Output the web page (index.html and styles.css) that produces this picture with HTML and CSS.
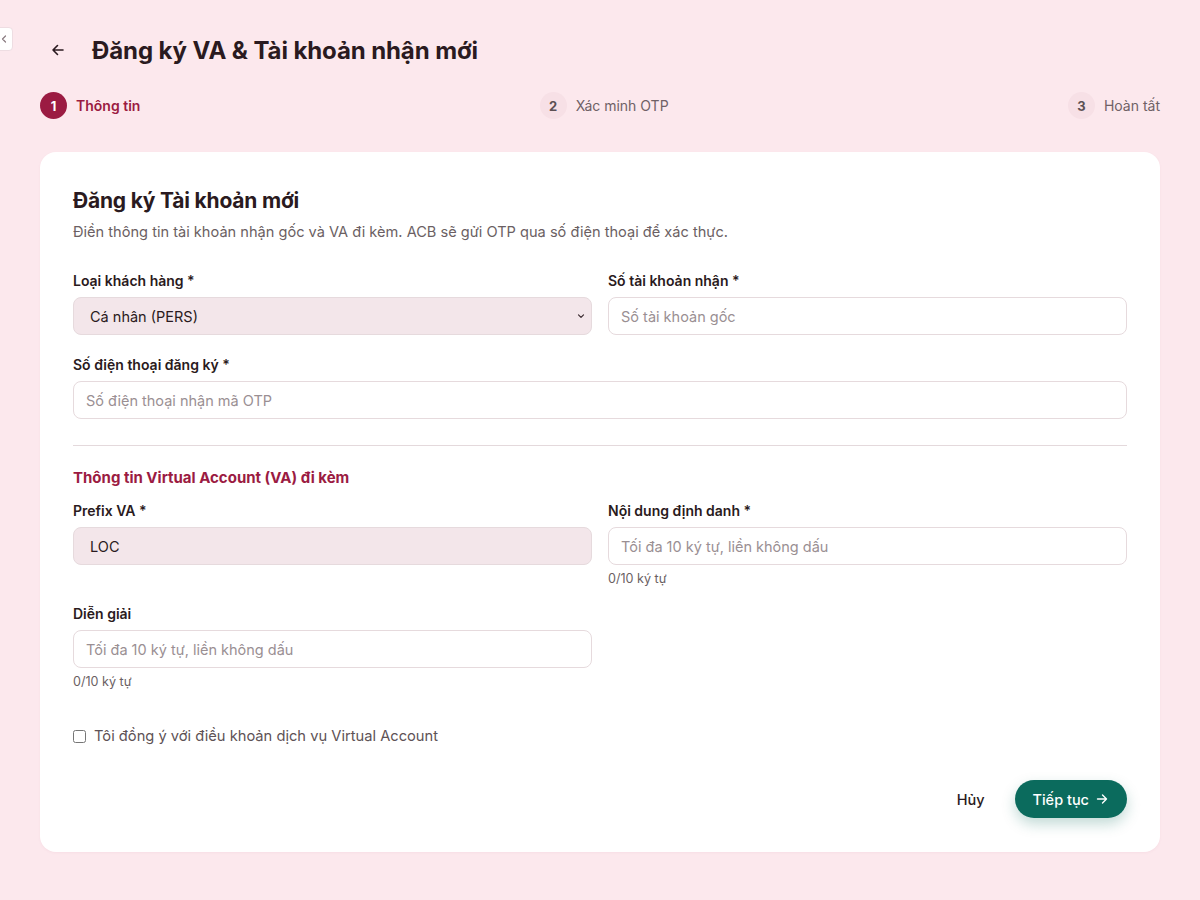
FILE: index.html
```html
<!DOCTYPE html>
<html lang="vi">
<head>
    <meta charset="UTF-8">
    <meta name="viewport" content="width=device-width, initial-scale=1.0">
    <title>Đăng ký VA & Tài khoản nhận mới</title>
    <link rel="stylesheet" href="styles.css">
</head>
<body>
    <!-- nút thu gọn sidebar -->
    <button class="side-toggle" aria-label="Thu gọn">
        <svg width="10" height="10" viewBox="0 0 10 10"><path d="M6.5 2 3.5 5l3 3" fill="none" stroke="#8a7a80" stroke-width="1.2" stroke-linecap="round" stroke-linejoin="round"/></svg>
    </button>

    <div class="page">
        <div class="page-header">
            <button class="back-btn" aria-label="Quay lại">
                <svg width="16" height="16" viewBox="0 0 16 16"><path d="M13 8H3M7.5 3.5 3 8l4.5 4.5" fill="none" stroke="#2a1a20" stroke-width="1.6" stroke-linecap="round" stroke-linejoin="round"/></svg>
            </button>
            <h1>Đăng ký VA &amp; Tài khoản nhận mới</h1>
        </div>

        <div class="stepper">
            <div class="step active"><span class="step-num">1</span><span class="step-label">Thông tin</span></div>
            <div class="step"><span class="step-num">2</span><span class="step-label">Xác minh OTP</span></div>
            <div class="step"><span class="step-num">3</span><span class="step-label">Hoàn tất</span></div>
        </div>

        <div class="card">
            <h2>Đăng ký Tài khoản mới</h2>
            <p class="desc">Điền thông tin tài khoản nhận gốc và VA đi kèm. ACB sẽ gửi OTP qua số điện thoại để xác thực.</p>

            <div class="grid">
                <div class="field">
                    <label>Loại khách hàng *</label>
                    <div class="select-wrap">
                        <select class="input filled">
                            <option>Cá nhân (PERS)</option>
                            <option>Doanh nghiệp (CORP)</option>
                        </select>
                        <svg class="caret" width="10" height="10" viewBox="0 0 10 10"><path d="M2.5 3.8 5 6.3l2.5-2.5" fill="none" stroke="#3a2a30" stroke-width="1.2" stroke-linecap="round" stroke-linejoin="round"/></svg>
                    </div>
                </div>
                <div class="field">
                    <label>Số tài khoản nhận *</label>
                    <input class="input" type="text" placeholder="Số tài khoản gốc">
                </div>
                <div class="field full">
                    <label>Số điện thoại đăng ký *</label>
                    <input class="input" type="text" placeholder="Số điện thoại nhận mã OTP">
                </div>
            </div>

            <hr class="divider">

            <h3>Thông tin Virtual Account (VA) đi kèm</h3>

            <div class="grid va">
                <div class="field">
                    <label>Prefix VA *</label>
                    <input class="input filled" type="text" value="LOC" readonly>
                </div>
                <div class="field">
                    <label>Nội dung định danh *</label>
                    <input class="input" type="text" placeholder="Tối đa 10 ký tự, liền không dấu">
                    <span class="hint">0/10 ký tự</span>
                </div>
                <div class="field">
                    <label>Diễn giải</label>
                    <input class="input" type="text" placeholder="Tối đa 10 ký tự, liền không dấu">
                    <span class="hint">0/10 ký tự</span>
                </div>
            </div>

            <label class="check">
                <input type="checkbox">
                <span>Tôi đồng ý với điều khoản dịch vụ Virtual Account</span>
            </label>

            <div class="actions">
                <button class="btn-cancel">Hủy</button>
                <button class="btn-primary">Tiếp tục
                    <svg width="14" height="14" viewBox="0 0 14 14"><path d="M2.5 7h9M7.5 3l4 4-4 4" fill="none" stroke="#fff" stroke-width="1.4" stroke-linecap="round" stroke-linejoin="round"/></svg>
                </button>
            </div>
        </div>
    </div>
</body>
</html>
```

FILE: styles.css
```css
* {
    box-sizing: border-box;
}
body {
    font-family: Inter, "Noto Sans", sans-serif;
    background-color: #fce8ed;
    color: #2a1a20;
    margin: 0;
    padding: 0;
}
.side-toggle {
    position: absolute;
    left: -10px;
    top: 27px;
    width: 23px;
    height: 24px;
    padding: 0 0 0 8px;
    background: #fff;
    border: 1px solid #eedde2;
    border-radius: 4px;
    display: flex;
    align-items: center;
    justify-content: flex-start;
}
.page {
    padding: 30px 40px 40px;
}
.page-header {
    display: flex;
    align-items: center;
    gap: 25px;
    padding-left: 9px;
    height: 40px;
}
.back-btn {
    width: 18px;
    height: 18px;
    padding: 0;
    border: none;
    background: none;
    display: flex;
    align-items: center;
    justify-content: center;
}
h1 {
    margin: 0;
    font-size: 24px;
    font-weight: 700;
    letter-spacing: -0.1px;
    color: #2a1a20;
}
.stepper {
    display: flex;
    justify-content: space-between;
    align-items: center;
    margin-top: 22px;
}
.step {
    display: flex;
    align-items: center;
    gap: 9px;
    font-size: 14px;
    color: #6f6166;
}
.step-num {
    width: 27px;
    height: 27px;
    border-radius: 50%;
    background: #f7e0e6;
    display: flex;
    align-items: center;
    justify-content: center;
    font-size: 13px;
    font-weight: 700;
    color: #5c5054;
}
.step.active .step-num {
    background: #9b1b42;
    color: #fff;
}
.step.active .step-label {
    color: #9b1b42;
    font-weight: 600;
}
.card {
    margin-top: 33px;
    background: #fff;
    border-radius: 16px;
    padding: 36px 33px 34px;
    box-shadow: 0 1px 3px rgba(150, 60, 90, 0.05);
}
h2 {
    margin: 0;
    font-size: 21px;
    font-weight: 700;
    letter-spacing: -0.2px;
}
.desc {
    margin: 10px 0 0;
    font-size: 14.6px;
    color: #6b5f63;
}
.grid {
    display: grid;
    grid-template-columns: 1fr 1fr;
    column-gap: 16px;
    row-gap: 21px;
    margin-top: 31px;
}
.grid.va {
    margin-top: 15px;
    row-gap: 19px;
}
.field {
    display: flex;
    flex-direction: column;
}
.field.full {
    grid-column: 1 / 3;
}
.field label {
    font-size: 14px;
    font-weight: 600;
    margin-bottom: 8px;
}
.input {
    width: 100%;
    height: 38px;
    padding: 0 12px;
    border: 1px solid #e6dadd;
    border-radius: 8px;
    background: #fff;
    font-family: inherit;
    font-size: 14.5px;
    color: #2a1a20;
    outline: none;
}
.input::placeholder {
    color: #9a8f93;
}
.input.filled {
    background: #f3e6ea;
    padding-left: 16px;
}
.select-wrap {
    position: relative;
}
.select-wrap select {
    appearance: none;
}
.select-wrap .caret {
    position: absolute;
    right: 6px;
    top: 14px;
}
.hint {
    margin-top: 6px;
    font-size: 12.6px;
    color: #6b5f63;
}
.divider {
    border: none;
    border-top: 1px solid #e4d9dc;
    margin: 26px 0 0;
}
h3 {
    margin: 22px 0 0;
    font-size: 15px;
    font-weight: 700;
    color: #9b1b42;
}
.check {
    display: flex;
    align-items: center;
    gap: 8px;
    margin-top: 38px;
    font-size: 14.7px;
    color: #5e5256;
}
.check input {
    width: 13px;
    height: 13px;
    margin: 0;
}
.actions {
    display: flex;
    justify-content: flex-end;
    align-items: center;
    gap: 14px;
    margin-top: 35px;
}
.btn-cancel {
    background: none;
    border: none;
    padding: 0 16px;
    font-family: inherit;
    font-size: 14.5px;
    font-weight: 500;
    color: #2a1a20;
}
.btn-primary {
    height: 38px;
    padding: 0 18px;
    border: none;
    border-radius: 19px;
    background: #0b6b5d;
    color: #fff;
    font-family: inherit;
    font-size: 14.5px;
    font-weight: 500;
    display: flex;
    align-items: center;
    gap: 6px;
    box-shadow: 0 6px 14px rgba(11, 107, 93, 0.25);
    cursor: pointer;
}
```
